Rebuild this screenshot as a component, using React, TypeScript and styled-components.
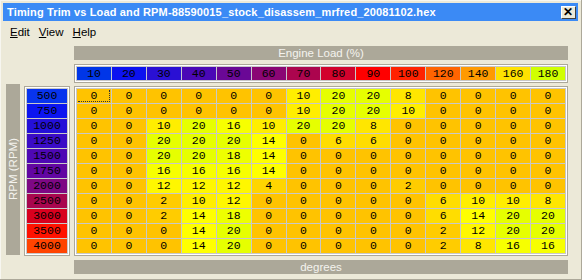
import React from "react"
import styled, { createGlobalStyle } from "styled-components"

const GlobalStyle = createGlobalStyle`
  html, body {
    margin: 0;
    padding: 0;
    background: #ece9d8;
  }
`

const loads = [10, 20, 30, 40, 50, 60, 70, 80, 90, 100, 120, 140, 160, 180]
const loadColors = [
  "#0036e8", "#0c12f0", "#2a10d4", "#4a08b6", "#6a0896", "#8a0674", "#ac054e",
  "#d2022c", "#ff0000", "#ff2200", "#ff6400", "#ff9a00", "#ffe200", "#d0ff00",
]

const rpms = [500, 750, 1000, 1250, 1500, 1750, 2000, 2500, 3000, 3500, 4000]
const rpmColors = [
  "#0834ee", "#0c14f0", "#2410d8", "#3a0cc6", "#4e08b4", "#6206a2", "#7e0884",
  "#a8064e", "#d8001e", "#ff1200", "#ff4400",
]

const table = [
  [0, 0, 0, 0, 0, 0, 10, 20, 20, 8, 0, 0, 0, 0],
  [0, 0, 0, 0, 0, 0, 10, 20, 20, 10, 0, 0, 0, 0],
  [0, 0, 10, 20, 16, 10, 20, 20, 8, 0, 0, 0, 0, 0],
  [0, 0, 20, 20, 20, 14, 0, 6, 6, 0, 0, 0, 0, 0],
  [0, 0, 20, 20, 18, 14, 0, 0, 0, 0, 0, 0, 0, 0],
  [0, 0, 16, 16, 16, 14, 0, 0, 0, 0, 0, 0, 0, 0],
  [0, 0, 12, 12, 12, 4, 0, 0, 0, 2, 0, 0, 0, 0],
  [0, 0, 2, 10, 12, 0, 0, 0, 0, 0, 6, 10, 10, 8],
  [0, 0, 2, 14, 18, 0, 0, 0, 0, 0, 6, 14, 20, 20],
  [0, 0, 0, 14, 20, 0, 0, 0, 0, 0, 2, 12, 20, 20],
  [0, 0, 0, 14, 20, 0, 0, 0, 0, 0, 2, 8, 16, 16],
]

// orange (0) -> yellow (14) -> lime (20)
const cellColor = (v: number) => `hsl(${46 + v}, 100%, 50%)`

const Window = styled.div`
  width: 582px;
  height: 280px;
  box-sizing: border-box;
  padding: 3px 4px 4px 3px;
  background: #ece9d8;
  box-shadow: inset -1px -1px 0 #aca899, inset 1px 1px 0 #f7f6f0;
  display: flex;
  flex-direction: column;
  overflow: hidden;
  font-family: "Liberation Sans", Arial, sans-serif;
`

const TitleBar = styled.div`
  height: 18px;
  background: #3b8af5;
  display: flex;
  align-items: center;
  justify-content: space-between;
  padding: 0 2px 0 4px;
  color: #fff;
  font-weight: bold;
  font-size: 11px;
  letter-spacing: 0.15px;
`

const CloseButton = styled.div`
  width: 15px;
  height: 13px;
  box-sizing: border-box;
  background: #ece9d8;
  border: 1px solid;
  border-color: #fff #404040 #404040 #fff;
  color: #000;
  font-size: 12px;
  font-weight: bold;
  line-height: 11px;
  text-align: center;
`

const MenuBar = styled.div`
  height: 22px;
  display: flex;
  align-items: center;
  gap: 9px;
  padding-left: 7px;
  font-size: 11.5px;
  color: #000;
`

const MenuItem = styled.span`
  &::first-letter {
    text-decoration: underline;
  }
`

const Body = styled.div`
  display: grid;
  grid-template-columns: 14px 46px 494px;
  grid-template-areas:
    ". . load"
    ". . cols"
    "rpm rows data"
    ". . deg";
  column-gap: 4px;
  padding: 3px 0 0 3px;
`

const GreyBar = styled.div<{ $area: string }>`
  grid-area: ${(p) => p.$area};
  height: 14px;
  background: #aca899;
  color: #f4f3ee;
  font-size: 11.5px;
  line-height: 14px;
  text-align: center;
  margin-top: ${(p) => (p.$area === "deg" ? 4 : 0)}px;
`

const SideBar = styled.div`
  grid-area: rpm;
  margin: 1px 0;
  background: #aca899;
  color: #f4f3ee;
  font-size: 11.5px;
  writing-mode: vertical-rl;
  transform: rotate(180deg);
  display: flex;
  align-items: center;
  justify-content: center;
  line-height: 14px;
`

const Panel = styled.div<{ $area: string }>`
  grid-area: ${(p) => p.$area};
  border: 1px solid #aca899;
  padding: 1px;
  background: #fff;
  margin-top: ${(p) => (p.$area === "cols" ? 4 : 3)}px;
`

const Grid = styled.div<{ $cols: number }>`
  display: grid;
  grid-template-columns: repeat(${(p) => p.$cols}, 1fr);
  gap: 1px;
  padding: 1px;
  background: #c8c8c8;
`

const Cell = styled.div<{ $h: number; $focus?: boolean }>`
  position: relative;
  height: ${(p) => p.$h}px;
  line-height: ${(p) => p.$h}px;
  text-align: center;
  color: #000;
  font-family: "Liberation Mono", "Courier New", monospace;
  font-size: 11.5px;

  ${(p) =>
    p.$focus &&
    `
    &::after {
      content: "";
      position: absolute;
      left: 1px;
      top: 1px;
      right: 1px;
      bottom: 1px;
      border-right: 1px dotted #333;
      border-bottom: 1px dotted #333;
    }
  `}
`

export default function App() {
  return (
    <>
      <GlobalStyle />
      <Window>
        <TitleBar>
          <span>Timing Trim vs Load and RPM-88590015_stock_disassem_mrfred_20081102.hex</span>
          <CloseButton>✕</CloseButton>
        </TitleBar>
        <MenuBar>
          <MenuItem>Edit</MenuItem>
          <MenuItem>View</MenuItem>
          <MenuItem>Help</MenuItem>
        </MenuBar>
        <Body>
          <GreyBar $area="load">Engine Load (%)</GreyBar>
          <Panel $area="cols">
            <Grid $cols={14}>
              {loads.map((l, i) => (
                <Cell key={l} $h={13} style={{ background: loadColors[i] }}>
                  {l}
                </Cell>
              ))}
            </Grid>
          </Panel>
          <SideBar>RPM (RPM)</SideBar>
          <Panel $area="rows">
            <Grid $cols={1}>
              {rpms.map((r, i) => (
                <Cell key={r} $h={14} style={{ background: rpmColors[i] }}>
                  {r}
                </Cell>
              ))}
            </Grid>
          </Panel>
          <Panel $area="data">
            <Grid $cols={14}>
              {table.map((row, ri) =>
                row.map((v, ci) => (
                  <Cell
                    key={`${ri}-${ci}`}
                    $h={14}
                    $focus={ri === 0 && ci === 0}
                    style={{ background: cellColor(v) }}
                  >
                    {v}
                  </Cell>
                ))
              )}
            </Grid>
          </Panel>
          <GreyBar $area="deg">degrees</GreyBar>
        </Body>
      </Window>
    </>
  )
}
